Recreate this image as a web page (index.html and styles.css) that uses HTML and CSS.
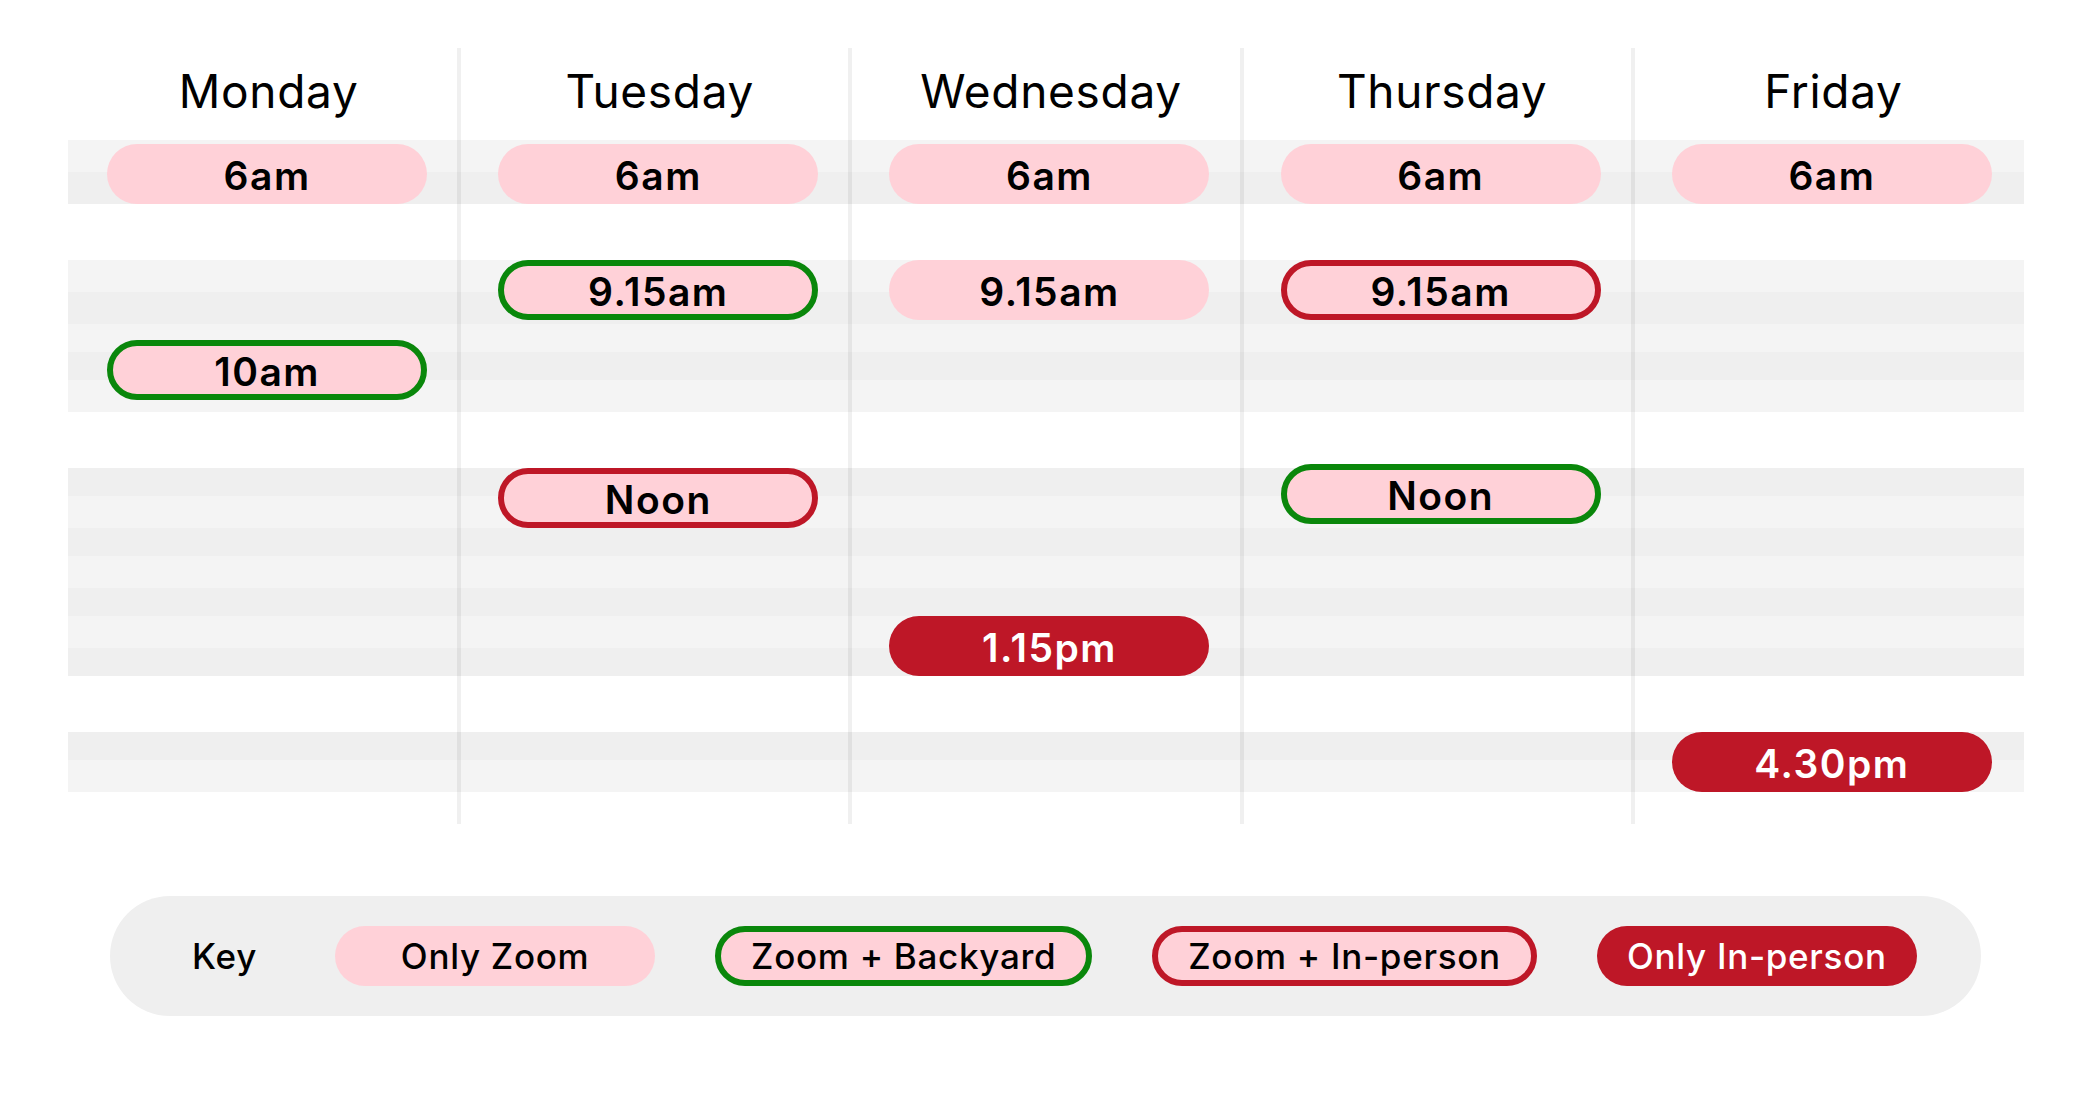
FILE: index.html
```html
<!DOCTYPE html>
<html lang="en">
<head>
<meta charset="utf-8">
<title>Weekly schedule</title>
<link rel="stylesheet" href="styles.css">
</head>
<body>
<main class="page">
  <section class="schedule">
    <div class="stripe light r2"></div>
    <div class="stripe dark r3"></div>
    <div class="stripe light r5"></div>
    <div class="stripe dark r6"></div>
    <div class="stripe light r7"></div>
    <div class="stripe dark r8"></div>
    <div class="stripe light r9"></div>
    <div class="stripe dark r11"></div>
    <div class="stripe light r12"></div>
    <div class="stripe dark r13"></div>
    <div class="stripe light r14"></div>
    <div class="stripe dark r15"></div>
    <div class="stripe light r16"></div>
    <div class="stripe dark r17"></div>
    <div class="stripe dark r19"></div>
    <div class="stripe light r20"></div>

    <div class="divider c2"></div>
    <div class="divider c3"></div>
    <div class="divider c4"></div>
    <div class="divider c5"></div>

    <div class="day c1">Monday</div>
    <div class="day c2">Tuesday</div>
    <div class="day c3">Wednesday</div>
    <div class="day c4">Thursday</div>
    <div class="day c5">Friday</div>

    <div class="pill zoom c1 slot-6am">6am</div>
    <div class="pill zoom c2 slot-6am">6am</div>
    <div class="pill zoom c3 slot-6am">6am</div>
    <div class="pill zoom c4 slot-6am">6am</div>
    <div class="pill zoom c5 slot-6am">6am</div>

    <div class="pill backyard c2 slot-915">9.15am</div>
    <div class="pill zoom c3 slot-915">9.15am</div>
    <div class="pill inperson-zoom c4 slot-915">9.15am</div>

    <div class="pill backyard c1 slot-10">10am</div>

    <div class="pill inperson-zoom c2 slot-noon">Noon</div>
    <div class="pill backyard c4 slot-noon early">Noon</div>

    <div class="pill inperson c3 slot-115">1.15pm</div>

    <div class="pill inperson c5 slot-430">4.30pm</div>
  </section>

  <section class="legend">
    <span class="legend-title">Key</span>
    <span class="pill key zoom">Only Zoom</span>
    <span class="pill key backyard">Zoom + Backyard</span>
    <span class="pill key inperson-zoom">Zoom + In-person</span>
    <span class="pill key inperson">Only In-person</span>
  </section>
</main>
</body>
</html>
```

FILE: styles.css
```css
html, body {
  margin: 0;
  padding: 0;
  background: #ffffff;
}

body {
  font-family: "Inter", "Noto Sans", "Liberation Sans", sans-serif;
  color: #000;
}

.page {
  width: 2092px;
  padding-top: 48px;
}

.schedule {
  display: grid;
  width: 1956px;
  margin: 0 68px;
  grid-template-columns: repeat(5, 1fr);
  grid-template-rows:
    92px 32px 32px 56px 32px 32px 28px 28px 32px 56px
    28px 32px 28px 32px 28px 32px 28px 56px 28px 32px 32px;
}

.stripe { grid-column: 1 / -1; }
.stripe.light { background: #f4f4f4; }
.stripe.dark { background: #efefef; }

.r2 { grid-row: 2; }
.r3 { grid-row: 3; }
.r5 { grid-row: 5; }
.r6 { grid-row: 6; }
.r7 { grid-row: 7; }
.r8 { grid-row: 8; }
.r9 { grid-row: 9; }
.r11 { grid-row: 11; }
.r12 { grid-row: 12; }
.r13 { grid-row: 13; }
.r14 { grid-row: 14; }
.r15 { grid-row: 15; }
.r16 { grid-row: 16; }
.r17 { grid-row: 17; }
.r19 { grid-row: 19; }
.r20 { grid-row: 20; }

.c1 { grid-column: 1; }
.c2 { grid-column: 2; }
.c3 { grid-column: 3; }
.c4 { grid-column: 4; }
.c5 { grid-column: 5; }

.divider {
  grid-row: 1 / -1;
  justify-self: start;
  width: 4px;
  margin-left: -2px;
  background: rgba(0, 0, 0, 0.06);
}

.day {
  grid-row: 1;
  align-self: start;
  text-align: center;
  padding-top: 20px;
  padding-left: 10px;
  font-size: 46px;
  line-height: 46px;
  font-weight: 400;
  letter-spacing: 0.7px;
}

.pill {
  box-sizing: border-box;
  height: 60px;
  border-radius: 30px;
  display: flex;
  align-items: center;
  justify-content: center;
  font-weight: 600;
  font-size: 39px;
  line-height: 1;
  letter-spacing: 1.5px;
  white-space: nowrap;
}

.schedule .pill {
  width: 320px;
  justify-self: center;
  margin-left: 7px;
  padding-top: 2px;
}

.zoom { background: #ffd1d8; }
.backyard { background: #ffd1d8; border: 6px solid #0a870b; }
.inperson-zoom { background: #ffd1d8; border: 6px solid #be1727; }
.inperson { background: #be1727; color: #fff; }

.slot-6am { grid-row: 2 / 4; align-self: end; }
.slot-915 { grid-row: 5 / 7; align-self: start; }
.slot-10 { grid-row: 7 / 10; align-self: start; margin-top: 16px; }
.slot-noon { grid-row: 11 / 13; align-self: start; }
.slot-noon.early { margin-top: -4px; }
.slot-115 { grid-row: 16 / 18; align-self: start; }
.slot-430 { grid-row: 19 / 21; align-self: start; }

.legend {
  box-sizing: border-box;
  width: 1871px;
  height: 120px;
  margin: 72px 0 0 110px;
  padding: 0 64px 0 82px;
  border-radius: 60px;
  background: #efefef;
  display: flex;
  align-items: center;
  gap: 60px;
}

.legend-title {
  font-size: 35px;
  font-weight: 500;
  letter-spacing: 0.8px;
  margin-right: 18px;
}

.pill.key {
  font-size: 35px;
  font-weight: 500;
  letter-spacing: 0.7px;
  min-width: 320px;
  padding: 0 32px;
}
```
